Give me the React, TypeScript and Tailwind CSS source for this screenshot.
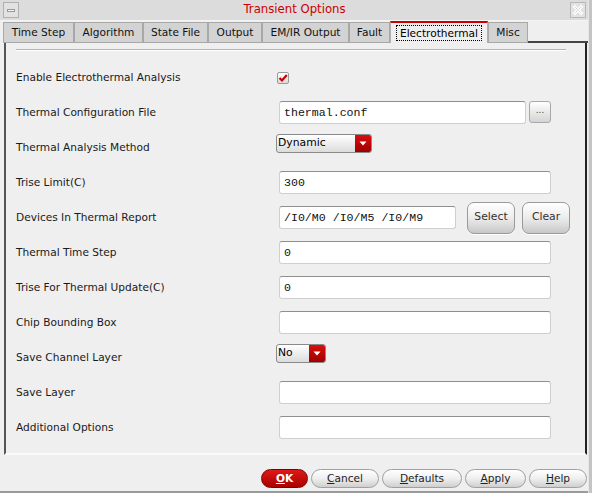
import React from "react";

const font = { fontFamily: '"DejaVu Sans", sans-serif' };
const mono = { fontFamily: '"Liberation Mono", monospace' };

const tabs: { label: string; w: string; active?: boolean }[] = [
  { label: "Time Step", w: "w-[71px]" },
  { label: "Algorithm", w: "w-[69px]" },
  { label: "State File", w: "w-[65px]" },
  { label: "Output", w: "w-[54px]" },
  { label: "EM/IR Output", w: "w-[87px]" },
  { label: "Fault", w: "w-[41px]" },
  { label: "Electrothermal", w: "w-[98px]", active: true },
  { label: "Misc", w: "w-[40px]" },
];

function Input({ value, w = "w-[272px]" }: { value?: string; w?: string }) {
  return (
    <div
      className={`${w} h-[23px] ml-[3px] bg-white rounded-[3px] border border-[#cfcfcf] border-t-[#8f8f8f] flex items-center pl-[4px] text-[11.6px] text-[#111]`}
      style={mono}
    >
      {value}
    </div>
  );
}

function Dropdown({ value, w }: { value: string; w: string }) {
  return (
    <div
      className={`${w} h-[19px] -mt-[9px] rounded-[3px] border border-[#8a8a8a] flex overflow-hidden bg-gradient-to-b from-white to-[#dcdcdc]`}
    >
      <div className="flex-1 flex items-center pl-[1px] text-[10.8px] text-black">{value}</div>
      <div className="w-[16px] h-full bg-gradient-to-b from-[#d81010] to-[#a00000] flex items-center justify-center">
        <svg width="8" height="5" viewBox="0 0 8 5">
          <polygon points="0.5,0.5 7.5,0.5 4,4.5" fill="#fff" />
        </svg>
      </div>
    </div>
  );
}

function Row({ label, children }: { label: string; children?: React.ReactNode }) {
  return (
    <div className="h-[35px] flex items-center">
      <div className="w-[270px] pl-[10px] text-[10.6px] text-[#1a1a1a]">{label}</div>
      {children}
    </div>
  );
}

function BigBtn({ label, w }: { label: string; w: string }) {
  return (
    <div
      className={`${w} h-[32px] rounded-[7px] border border-[#9a9a9a] bg-gradient-to-b from-white via-[#ececec] to-[#c8c8c8] flex items-center justify-center text-[10.8px] text-[#333] shadow-[0_1px_0_#fff]`}
    >
      {label}
    </div>
  );
}

function FootBtn({ first, rest, w, primary }: { first: string; rest: string; w: string; primary?: boolean }) {
  return (
    <div
      className={`${w} h-[19px] rounded-full border flex items-center justify-center text-[10.6px] ${
        primary
          ? "border-[#800000] bg-gradient-to-b from-[#e01818] to-[#a80000] text-white font-bold"
          : "border-[#a0a0a0] bg-gradient-to-b from-white via-[#efefef] to-[#cfcfcf] text-[#222]"
      }`}
    >
      <span>
        <span className="underline">{first}</span>
        {rest}
      </span>
    </div>
  );
}

export default function App() {
  return (
    <div className="w-[592px] h-[493px] bg-[#efefef] flex overflow-hidden" style={font}>
      <div className="w-[588px] h-full flex flex-col border-b-2 border-[#9a9a9a]">
        {/* title bar */}
        <div className="h-[21px] flex items-center bg-[#dcdcdc] border-b border-[#f4f4f4] px-[3px]">
          <div className="w-[16px] h-[16px] border border-[#b0b0b0] bg-[#e2e2e2] flex items-center justify-center">
            <div className="w-[8px] h-[3px] border border-[#999] bg-[#f4f4f4]" />
          </div>
          <div className="flex-1 text-center text-[11.7px] text-[#cc0000]">Transient Options</div>
          <div className="w-[16px] h-[16px] border border-[#b8b8b8] bg-[#e2e2e2] flex items-center justify-center mr-[-1px]">
            <svg width="12" height="12" viewBox="0 0 12 12">
              <path d="M1.5 1.5 L10.5 10.5 M10.5 1.5 L1.5 10.5" stroke="#ffffff" strokeWidth="3" />
              <path d="M1.5 1.5 L10.5 10.5 M10.5 1.5 L1.5 10.5" stroke="#bdbdbd" strokeWidth="1" strokeDasharray="1 1" />
            </svg>
          </div>
        </div>
        {/* tabs */}
        <div className="h-[22px] flex items-end pl-[3px]">
          {tabs.map((t) =>
            t.active ? (
              <div
                key={t.label}
                className={`${t.w} h-[22px] bg-[#efefef] border-t-2 border-t-[#cc0000] border-x border-x-[#b0b0b0] flex items-center justify-center text-[10.6px] text-black`}
              >
                <span className="border border-dotted border-black px-[3px] py-[1px] leading-[12px]">{t.label}</span>
              </div>
            ) : (
              <div
                key={t.label}
                className={`${t.w} h-[21px] bg-[#d3d3d3] border border-[#a8a8a8] flex items-center justify-center text-[10.6px] text-[#111] pt-[1px]`}
              >
                {t.label}
              </div>
            )
          )}
          <div className="flex-1 h-[2px] bg-[#444]" />
        </div>
        {/* panel */}
        <div className="ml-[4px] w-[583px] h-[412px] border-l-2 border-r-2 border-b-2 border-l-[#555] border-r-[#222] border-b-[#fafafa] flex flex-col">
          <div className="mt-[6px] ml-[10px] w-[550px] h-[2px] border-t border-[#b4b4b4] border-b border-b-white" />
          <div className="mt-[9px] flex flex-col">
            <Row label="Enable Electrothermal Analysis">
              <div className="ml-[1px] w-[12px] h-[12px] rounded-[2px] border border-[#9a9a9a] bg-gradient-to-b from-white to-[#dadada] flex items-center justify-center">
                <svg width="10" height="10" viewBox="0 0 10 10">
                  <path d="M1.5 5 L4 7.5 L8.8 2" stroke="#cc0000" strokeWidth="2.2" fill="none" />
                </svg>
              </div>
            </Row>
            <Row label="Thermal Configuration File">
              <Input value="thermal.conf" w="w-[247px]" />
              <div className="ml-[3px] w-[22px] h-[22px] -mt-[1px] rounded-[3px] border border-[#a8a8a8] bg-gradient-to-b from-white to-[#d4d4d4] flex items-center justify-center text-[9px] text-[#444] pb-[3px]">
                ...
              </div>
            </Row>
            <Row label="Thermal Analysis Method">
              <Dropdown value="Dynamic" w="w-[96px]" />
            </Row>
            <Row label="Trise Limit(C)">
              <Input value="300" />
            </Row>
            <Row label="Devices In Thermal Report">
              <Input value="/I0/M0 /I0/M5 /I0/M9" w="w-[177px]" />
              <div className="ml-[11px]">
                <BigBtn label="Select" w="w-[48px]" />
              </div>
              <div className="ml-[7px]">
                <BigBtn label="Clear" w="w-[48px]" />
              </div>
            </Row>
            <Row label="Thermal Time Step">
              <Input value="0" />
            </Row>
            <Row label="Trise For Thermal Update(C)">
              <Input value="0" />
            </Row>
            <Row label="Chip Bounding Box">
              <Input />
            </Row>
            <Row label="Save Channel Layer">
              <Dropdown value="No" w="w-[50px]" />
            </Row>
            <Row label="Save Layer">
              <Input />
            </Row>
            <Row label="Additional Options">
              <Input />
            </Row>
          </div>
        </div>
        {/* footer */}
        <div className="flex-1 flex items-start justify-end pt-[14px] pr-[1px] gap-[3px]">
          <FootBtn first="O" rest="K" w="w-[47px]" primary />
          <FootBtn first="C" rest="ancel" w="w-[68px]" />
          <FootBtn first="D" rest="efaults" w="w-[80px]" />
          <FootBtn first="A" rest="pply" w="w-[61px]" />
          <FootBtn first="H" rest="elp" w="w-[58px]" />
        </div>
      </div>
      {/* right strip */}
      <div className="w-[4px] h-full flex">
        <div className="w-[1px] h-full bg-[#e6e6e6]" />
        <div className="w-[3px] h-full bg-[#c4c4c4]" />
      </div>
    </div>
  );
}
